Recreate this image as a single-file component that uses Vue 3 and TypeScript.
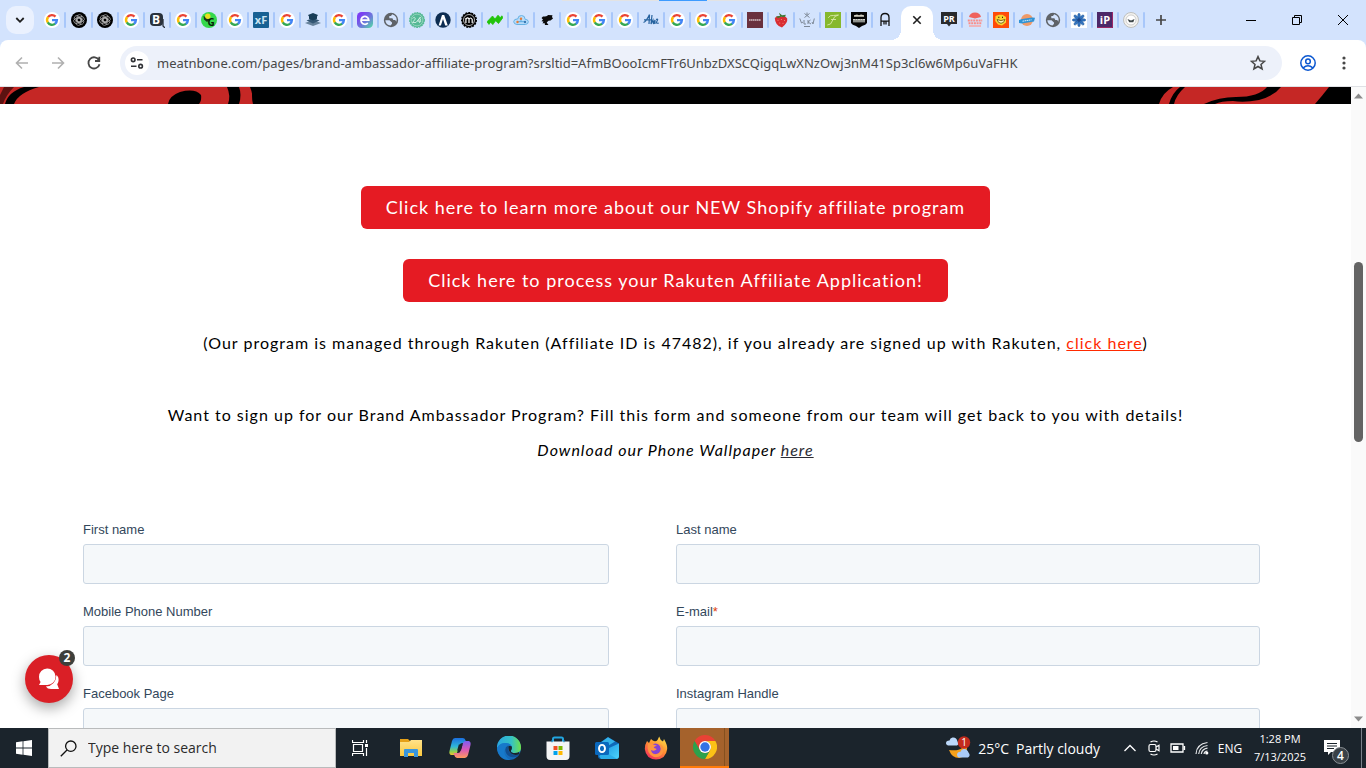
<script setup lang="ts">
import { ref } from 'vue'

interface Letter {
  text: string
  x: number
  y: number
  size: number
  fill: string
}

interface Tab {
  icon: string
  title: string
}

interface Field {
  id: string
  label: string
  required?: boolean
}

const google = (n: number): Tab[] => Array.from({ length: n }, () => ({ icon: 'google', title: 'Google Search' }))
const tab = (icon: string, title: string): Tab => ({ icon, title })

const letters: Record<string, Letter> = {
  bigb: { text: 'B', x: 7, y: 12, size: 12, fill: '#fff' },
  greeng: { text: 'G', x: 10, y: 14, size: 10, fill: '#071c08' },
  xf: { text: 'xF', x: 8, y: 12, size: 11, fill: '#c9e4f2' },
  pr: { text: 'PR', x: 8, y: 10, size: 9, fill: '#fff' },
  ip: { text: 'iP', x: 8, y: 12, size: 11, fill: '#fff' },
}

const tabsBefore: Tab[] = [
  ...google(1),
  tab('gpt', 'ChatGPT'),
  tab('gpt', 'ChatGPT'),
  ...google(1),
  tab('bigb', 'B'),
  ...google(1),
  tab('greeng', 'G'),
  ...google(1),
  tab('xf', 'xF'),
  ...google(1),
  tab('stack', 'Library'),
  ...google(1),
  tab('epurple', 'e'),
  tab('globe', 'New page'),
  tab('seal', '24'),
  tab('bluea', 'A'),
  tab('gearm', 'm'),
  tab('zigzag', 'Trends'),
  tab('cloud', 'Cloud'),
  tab('bird', 'Bird'),
  ...google(3),
  tab('script', 'Alexis'),
  ...google(3),
  tab('maroon', 'Treehouse'),
  tab('berry', 'Strawberry'),
  tab('crest', 'Ulku'),
  tab('leaf', 'F'),
  tab('shield', 'Moonshine'),
  tab('arch', 'A'),
]

const tabsAfter: Tab[] = [
  tab('pr', 'PR'),
  tab('burger', 'Burger'),
  tab('smile', 'Smile'),
  tab('orb', 'Orb'),
  tab('globe', 'New page'),
  tab('flower', 'Flower'),
  tab('ip', 'iP'),
  tab('coin', 'Coin'),
]

const url = ref(
  'meatnbone.com/pages/brand-ambassador-affiliate-program?srsltid=AfmBOooIcmFTr6UnbzDXSCQigqLwXNzOwj3nM41Sp3cl6w6Mp6uVaFHK',
)

const fields: Field[] = [
  { id: 'first-name', label: 'First name' },
  { id: 'last-name', label: 'Last name' },
  { id: 'phone', label: 'Mobile Phone Number' },
  { id: 'email', label: 'E-mail', required: true },
  { id: 'facebook', label: 'Facebook Page' },
  { id: 'instagram', label: 'Instagram Handle' },
]

const apps: Tab[] = [
  tab('explorer', 'File Explorer'),
  tab('copilot', 'Copilot'),
  tab('edge', 'Microsoft Edge'),
  tab('store', 'Microsoft Store'),
  tab('outlook', 'Outlook'),
  tab('firefox', 'Firefox'),
  tab('chrome', 'Google Chrome'),
]
</script>

<template>
  <div class="desktop">
    <svg class="defs" aria-hidden="true">
      <defs>
        <linearGradient id="g-e" x1="0" y1="0" x2="1" y2="1">
          <stop offset="0.2" stop-color="#7b3ff2" /><stop offset="0.6" stop-color="#6c7fd8" /><stop offset="1" stop-color="#4fe3a0" />
        </linearGradient>
        <linearGradient id="g-edge" x1="0" y1="0" x2="1" y2="0">
          <stop offset="0" stop-color="#2aa7e0" /><stop offset="0.6" stop-color="#35c1c5" /><stop offset="1" stop-color="#6ee04b" />
        </linearGradient>
        <linearGradient id="g-edge2" x1="0" y1="0" x2="0" y2="1">
          <stop offset="0" stop-color="#1b8fd8" /><stop offset="1" stop-color="#1565b4" />
        </linearGradient>
        <linearGradient id="g-cop1" x1="0" y1="0" x2="0" y2="1">
          <stop offset="0" stop-color="#1b6fe0" /><stop offset="0.5" stop-color="#2fb6d8" /><stop offset="0.8" stop-color="#8fd14f" /><stop offset="1" stop-color="#f2c230" />
        </linearGradient>
        <linearGradient id="g-cop2" x1="0" y1="0" x2="0" y2="1">
          <stop offset="0" stop-color="#7d5cf0" /><stop offset="0.5" stop-color="#d958b8" /><stop offset="1" stop-color="#ff9a5c" />
        </linearGradient>
        <linearGradient id="g-fox" x1="0.8" y1="0" x2="0.2" y2="1">
          <stop offset="0" stop-color="#ffe14a" /><stop offset="0.45" stop-color="#ff9330" /><stop offset="1" stop-color="#f5285e" />
        </linearGradient>
        <linearGradient id="g-out" x1="0" y1="0" x2="1" y2="1">
          <stop offset="0" stop-color="#1690e0" /><stop offset="1" stop-color="#4fd6fb" />
        </linearGradient>
        <linearGradient id="g-folder" x1="0" y1="0" x2="0" y2="1">
          <stop offset="0" stop-color="#ffe28a" /><stop offset="1" stop-color="#fbc93f" />
        </linearGradient>
      </defs>

      <symbol id="i-google" viewBox="0 0 16 16">
        <circle cx="8" cy="8" r="8" fill="#fff" />
        <g fill="none" stroke-width="2.4">
          <path d="M4 5.1A4.9 4.9 0 0 1 11.5 4.6" stroke="#ea4335" />
          <path d="M3.9 10.6A4.9 4.9 0 0 1 4.1 5" stroke="#fbbc05" />
          <path d="M11.2 11.7A4.9 4.9 0 0 1 3.8 10.4" stroke="#34a853" />
          <path d="M8 8.1H12.9A4.9 4.9 0 0 1 11 11.9" stroke="#4285f4" />
        </g>
      </symbol>
      <symbol id="i-gpt" viewBox="0 0 16 16">
        <circle cx="8" cy="8" r="8" fill="#000" />
        <g fill="none" stroke="#c9c9c9" stroke-width="0.6">
          <rect v-for="a in [0, 60, 120, 180, 240, 300]" :key="a" x="6" y="2.6" width="5" height="7.6" rx="2.5" :transform="`rotate(${a} 8 8)`" />
        </g>
      </symbol>
      <symbol id="i-bigb" viewBox="0 0 16 16">
        <rect x="1" y="1" width="13" height="13" rx="4" fill="#29323c" />
        <path d="M14 7V14L16 16" stroke="#29323c" stroke-width="1.3" fill="none" />
      </symbol>
      <symbol id="i-greeng" viewBox="0 0 16 16">
        <circle cx="8" cy="8" r="8" fill="#35d84c" />
        <path d="M2.5 4L9 7.5L6 10L3 7.5Z" fill="#17351a" />
        <circle cx="6.8" cy="4.2" r="2.7" fill="#e9e01e" />
      </symbol>
      <symbol id="i-xf" viewBox="0 0 16 16">
        <rect width="16" height="16" rx="1" fill="#176093" />
      </symbol>
      <symbol id="i-stack" viewBox="0 0 16 16">
        <path d="M0 11L8 8L16 11L8 14Z" fill="#66829b" />
        <path d="M1.5 8.6L8 6L14.5 8.6L8 11.5Z" fill="#345774" />
        <path d="M3 3L8 1L13 3L12 4.5V6.8L8 8.6L4 6.8V4.5Z" fill="#183d58" />
      </symbol>
      <symbol id="i-epurple" viewBox="0 0 16 16">
        <rect width="16" height="16" rx="4.5" fill="url(#g-e)" />
        <path d="M4.2 8.2H11.8A3.9 3.9 0 1 0 10.8 11" fill="none" stroke="#fff" stroke-width="1.7" />
      </symbol>
      <symbol id="i-globe" viewBox="0 0 16 16">
        <circle cx="8" cy="8" r="7.2" fill="#5f6368" />
        <path d="M2.3 8.3H6.5L9 10.6V11.8L7.5 13.6Q2.8 13.2 2.3 8.3Z" fill="#d3e3fd" />
        <path d="M9.2 2.2L8 4H6.3V6.3H9.4L10.3 8H12.2L13.4 9.8Q15 4.5 9.2 2.2Z" fill="#d3e3fd" />
      </symbol>
      <symbol id="i-seal" viewBox="0 0 16 16">
        <circle cx="8" cy="8" r="7.3" fill="#55b995" stroke="#55b995" stroke-width="1.3" stroke-dasharray="1.8 0.8" />
        <circle cx="8" cy="8" r="5.9" fill="none" stroke="#a9dcca" stroke-width="0.7" />
        <path d="M3.5 6.5Q6 4 6.3 7L3.5 10.5H7L11.5 5L8.6 9.2H12.2M11.7 6.5L10.5 11" fill="none" stroke="#cfeee4" stroke-width="0.9" />
      </symbol>
      <symbol id="i-bluea" viewBox="0 0 16 16">
        <circle cx="8" cy="8" r="7.7" fill="#0d2d52" />
        <path d="M3.6 13.4L7 3H9.2L12.8 13.4H10.2L8 7L5.9 13.4Z" fill="#fff" />
      </symbol>
      <symbol id="i-gearm" viewBox="0 0 16 16">
        <circle cx="8" cy="8" r="7.2" fill="#000" stroke="#000" stroke-width="1.6" stroke-dasharray="2 1" />
        <circle cx="8" cy="8" r="5.5" fill="none" stroke="#ddd" stroke-width="0.8" />
        <path d="M4.9 11V6M4.9 7.5Q6.4 4.5 8 7V11M8 7.5Q9.6 4.5 11.2 7.5V11" fill="none" stroke="#fff" stroke-width="1.2" />
      </symbol>
      <symbol id="i-zigzag" viewBox="0 0 16 16">
        <path d="M0 9.8L5.5 4L8 7L11 3.2L13.3 5.8L14.8 3.8L16 5.5L11.5 11.5L8.6 8.8L5.8 12.6L3.6 10.2L2 12.4Z" fill="#22c40b" stroke="#22c40b" stroke-width="0.8" />
      </symbol>
      <symbol id="i-cloud" viewBox="0 0 16 16">
        <path d="M4 12.5H12.5Q15.5 12 15.3 9.6Q15 7.2 12.2 7.4Q12 3.5 8.5 3.5Q5 3.5 4.8 6.9Q0.8 6.8 0.7 9.7Q0.8 12.2 4 12.5Z" fill="#b6dbfa" stroke="#65b2e4" />
        <path d="M4 9.7H12M8 7V9.7" stroke="#5ba8dd" />
        <circle cx="8" cy="6.7" r="1.2" fill="#e87c34" /><circle cx="4.5" cy="10" r="1.2" fill="#e87c34" /><circle cx="12" cy="10" r="1.2" fill="#3878b4" />
      </symbol>
      <symbol id="i-bird" viewBox="0 0 16 16">
        <path d="M2.5 6L4 4.5Q8 4.5 9 3L13.5 3.2L13 5L14 6.5L11.5 8.5L9.5 8.8L7.7 10.5L9.5 13H6L5.5 11L3.5 11.5L4.5 9.5L2.5 9.2L4 7.5Z" fill="#0b0b0b" />
      </symbol>
      <symbol id="i-script" viewBox="0 0 16 16">
        <path d="M0.5 10.5Q3 10 6.5 2.6L6 12M1 7.8H9M9 3L8 12L10 8L10.5 12L12 8V12M13 7.5Q15.8 6.2 14 9Q12.5 12 15.8 11" fill="none" stroke="#27639f" stroke-width="1.2" />
      </symbol>
      <symbol id="i-maroon" viewBox="0 0 16 16">
        <rect width="16" height="16" fill="#69303d" />
        <path d="M2 8H14" stroke="#d3bfc4" stroke-width="1.3" stroke-dasharray="1.5 0.4" />
      </symbol>
      <symbol id="i-berry" viewBox="0 0 16 16">
        <path d="M1.8 6Q5 2.8 8 4.8Q11.5 2.8 14.2 6.5Q15 10.8 9 15.5Q2 13.5 1.8 6Z" fill="#d92d32" />
        <path d="M3 4.6L7 4L6 0.8L9 3.2L13 2.8L11.5 5.2L8 4.8L5 6.3Z" fill="#3f7a35" />
        <g fill="#f6a18d"><circle cx="5" cy="8.3" r="0.5" /><circle cx="8.3" cy="7.6" r="0.5" /><circle cx="11.5" cy="8.5" r="0.5" /><circle cx="6.8" cy="11" r="0.5" /><circle cx="10" cy="11.2" r="0.5" /></g>
      </symbol>
      <symbol id="i-crest" viewBox="0 0 16 16">
        <path d="M5.5 1.5L10.5 5.5M10.5 1.5L5.5 5.5M8 0.5V3M0.8 6.5L2.5 11L4 10M5 8V12H7M9 8V12M9 10L11.5 8M9 10L12 12M13 10L14 12L15.3 6.5M5 14.5H11" fill="none" stroke="#7d8896" stroke-width="1" />
      </symbol>
      <symbol id="i-leaf" viewBox="0 0 16 16">
        <rect width="16" height="16" fill="#86b82d" />
        <path d="M2.3 13Q6 13.5 7.8 8Q9 3.5 13.5 3M3.2 5.8Q5 2.8 8.4 3.5L13.5 3M6 7.5H11" fill="none" stroke="#d9e8a8" stroke-width="0.9" />
      </symbol>
      <symbol id="i-shield" viewBox="0 0 16 16">
        <path d="M0 0H16V11Q15 13 11 14L8 16L5 14Q1 13 0 11Z" fill="#050505" />
        <path d="M3 3.2L6 2.5L8 3.2L10 2.5L13 3.2V4.8H3Z" fill="#d4d1c2" />
        <path d="M2 7.2H14V10.4H2Z" fill="#8d908c" />
        <path d="M2 7.6H14" stroke="#dcdcd6" stroke-width="1" stroke-dasharray="2 0.5" />
      </symbol>
      <symbol id="i-arch" viewBox="0 0 16 16">
        <path d="M4 14V5.5Q4 1.5 8 1.5Q12 1.5 12 5.5V14M4 9.2H12M7 9.2V12.5M9 9.2V12.5" fill="none" stroke="#111" stroke-width="1.3" />
      </symbol>
      <symbol id="i-pr" viewBox="0 0 16 16">
        <path d="M0 0H16V12H10L8 14.5L6 12H0Z" fill="#292a2c" />
      </symbol>
      <symbol id="i-burger" viewBox="0 0 16 16">
        <path d="M2 5Q3 0.5 8 0.5Q13 0.5 14 5L8 6.5Z" fill="#ef625d" />
        <path d="M0.8 8.4H15.2M1.5 11.2H14.5" stroke="#fa8d88" stroke-width="2" stroke-dasharray="2 0.7" />
        <path d="M2 14H14" stroke="#eeb4ba" stroke-width="2" />
      </symbol>
      <symbol id="i-smile" viewBox="0 0 16 16">
        <rect width="16" height="16" fill="#ff4c08" />
        <path d="M2.5 4L6 2.8L9.5 2.7L13 5V10.5L9 13.6L5 12.5L2.2 9Z" fill="#f8d42e" />
        <path d="M4 7.5L8 8.6L12 7.5Q11 11.3 8 11.3Q5 11.3 4 7.5Z" fill="#fff3b8" stroke="#755b12" stroke-width="0.9" />
        <path d="M5.8 4.7V6M9.5 4.7V6" stroke="#34290d" />
      </symbol>
      <symbol id="i-orb" viewBox="0 0 16 16">
        <circle cx="8" cy="8" r="6" fill="#ef9a68" />
        <path d="M0 8L3 7L13 5.6L16 5.8L15 9.6L3 11.5L0 11Z" fill="#3193d5" />
        <path d="M3.5 9.2L12.5 7.8" stroke="#d5edfc" stroke-dasharray="1.6 0.5" />
      </symbol>
      <symbol id="i-flower" viewBox="0 0 16 16">
        <rect width="16" height="16" fill="#fff" />
        <g stroke="#174f92" stroke-width="0.5" fill="#3475c1">
          <ellipse v-for="a in [0, 45, 90, 135, 180, 225, 270, 315]" :key="a" cx="8" cy="4.2" rx="1.3" ry="3" :transform="`rotate(${a} 8 8)`" />
        </g>
        <circle cx="8" cy="8" r="1.8" fill="#1d4588" />
      </symbol>
      <symbol id="i-ip" viewBox="0 0 16 16">
        <rect width="16" height="16" fill="#4b2768" />
        <path d="M15.5 0V15.5H0" fill="none" stroke="#9b2765" />
      </symbol>
      <symbol id="i-coin" viewBox="0 0 16 16">
        <circle cx="8" cy="8" r="7.5" fill="#f3f2ef" stroke="#bfc0be" />
        <circle cx="8" cy="8" r="5" fill="#fff" stroke="#bbb" stroke-width="0.7" />
        <path d="M4.5 7L8 8.5L11.5 7L10.3 10.3H6.2Z" fill="#40494b" />
      </symbol>

      <symbol id="a-explorer" viewBox="0 0 24 24">
        <path d="M1 3H9L11 5V10H1Z" fill="#e6a118" />
        <path d="M1 6H10L12 4H23V20H1Z" fill="url(#g-folder)" />
        <path d="M5 21V14Q5 13 6 13H18Q19 13 19 14V21H15V17H9V21Z" fill="#3a96dc" />
      </symbol>
      <symbol id="a-copilot" viewBox="0 0 24 24">
        <path d="M7 2H15Q17 2 17.8 5L18.5 7H14Q12 7 11.3 9.5L9 17Q8.2 19 6 19H3Q0.8 18 1.5 15L4 5Q4.8 2 7 2Z" fill="url(#g-cop1)" />
        <path d="M17 22H9Q7 22 6.2 19L5.5 17H10Q12 17 12.7 14.5L15 7Q15.8 5 18 5H21Q23.2 6 22.5 9L20 19Q19.2 22 17 22Z" fill="url(#g-cop2)" />
        <path d="M10.8 8.5H14.6L13 14.5H9.2Z" fill="#1b242c" />
      </symbol>
      <symbol id="a-edge" viewBox="0 0 24 24">
        <circle cx="12" cy="12" r="12" fill="url(#g-edge2)" />
        <path d="M0 12A12 12 0 0 1 24 11Q24.5 17 18 17Q13.5 17 14 14.5Q15.5 12.5 14.5 10Q12 6 7 7.2Q2 8 0 12Z" fill="url(#g-edge)" />
        <path d="M0 12Q3 6.5 9 7Q13 7.2 14.7 10.2L12 9.4Q7 10 7 15Q7.5 21.5 13.5 23.9Q2 25 0 12Z" fill="#1779ca" />
        <path d="M11 9.6Q6.8 11.8 9 17Q12 23 20.5 20.4L22.3 18.2Q18.5 20 14.7 18Q10.3 15.6 11 9.6Z" fill="#124f91" />
        <path d="M14.6 10.2Q15.5 12.5 14 14.5Q13.5 17 18 17Q20.5 17 22 16L22.5 18Q18 20 14.2 17.5Q10.5 14.5 11.6 9.8Z" fill="#1b242c" />
      </symbol>
      <symbol id="a-store" viewBox="0 0 24 24">
        <path d="M7 7V3Q7 1.5 8.5 1.5H15.5Q17 1.5 17 3V7" fill="none" stroke="#22a5e0" stroke-width="2" />
        <path d="M0.5 5.5H23.5V20Q23.5 24 20 24H4Q0.5 24 0.5 20Z" fill="#f4f4f5" />
        <path d="M6 4.2V6.2M18 4.2V6.2" stroke="#218fc5" stroke-width="1.2" />
        <path d="M7.5 10H11.5V14H7.5Z" fill="#f04e23" /><path d="M12.5 10H16.5V14H12.5Z" fill="#7db900" />
        <path d="M7.5 15H11.5V19H7.5Z" fill="#00a2ed" /><path d="M12.5 15H16.5V19H12.5Z" fill="#ffb800" />
      </symbol>
      <symbol id="a-outlook" viewBox="0 0 24 24">
        <path d="M3 8L13 1L24 7.5V20Q24 23 21 23H6Q3 23 3 20Z" fill="#0f69b8" />
        <path d="M5 7L13 1.3L20 5.6L11 11Z" fill="#35b3e9" />
        <path d="M14 12L24 7.5V20Q24 23 21 23H7Z" fill="url(#g-out)" />
        <path d="M4 20L10 16L22 22.7Q21 23 20 23H6Z" fill="#2baeea" />
        <rect y="6" width="14" height="13" rx="1.5" fill="#0a68bd" />
        <ellipse cx="7" cy="12.5" rx="3" ry="3.6" fill="none" stroke="#fff" stroke-width="1.9" />
      </symbol>
      <symbol id="a-firefox" viewBox="0 0 24 24">
        <path d="M3 5L5 7L7 3Q9 5 10 5Q12 6 13.5 4L15.2 0.5Q16 4 19 5.5L20 3Q23.5 9 23.2 13Q22 23 12 23.5Q2 23 0.8 13Q1 8 3 5Z" fill="url(#g-fox)" />
        <circle cx="11.5" cy="12.8" r="5.2" fill="#8642d5" />
        <path d="M4 7.5Q7 6.5 9.5 8.5L13 9.7Q10 10.2 9.7 11.8L12.8 13Q10.5 15.8 7 14Q7.6 19 13 18Q17 17 17 13Q16.8 9.8 14.5 8Q20 9 19.5 15Q17.5 22 10 21Q2 18 4 7.5Z" fill="#ff9640" />
      </symbol>
      <symbol id="a-chrome" viewBox="0 0 24 24">
        <path d="M1.6 6A12 12 0 0 1 22.4 6H12L6.8 15Z" fill="#e94235" />
        <path d="M22.4 6A12 12 0 0 1 12 24L17.2 15A6 6 0 0 0 12 6Z" fill="#fbc116" />
        <path d="M12 24A12 12 0 0 1 1.6 6L6.8 15A6 6 0 0 0 17.2 15Z" fill="#2da14c" />
        <circle cx="12" cy="12" r="6" fill="#fff" /><circle cx="12" cy="12" r="4.7" fill="#3372e3" />
      </symbol>
    </svg>

    <header class="browser">
      <div class="topline"><i></i><b></b><i></i></div>
      <nav class="strip" aria-label="Tabs">
        <button class="tabsearch" aria-label="Search tabs">
          <svg width="10" height="10" viewBox="0 0 10 10"><path d="M1.3 3L5 6.8L8.7 3" fill="none" stroke="#1f1f1f" stroke-width="1.8" /></svg>
        </button>
        <button v-for="(t, i) in tabsBefore" :key="`b${i}`" class="tab" :class="{ wide: i < 2, plain: i === tabsBefore.length - 1 }" :aria-label="t.title">
          <svg width="16" height="16">
            <use :href="`#i-${t.icon}`" />
            <text v-if="letters[t.icon]" :x="letters[t.icon].x" :y="letters[t.icon].y" :font-size="letters[t.icon].size" :fill="letters[t.icon].fill">{{ letters[t.icon].text }}</text>
          </svg>
        </button>
        <div class="active">
          <button class="close" aria-label="Close tab">
            <svg width="10" height="10" viewBox="0 0 10 10"><path d="M1.3 1.3L8.7 8.7M8.7 1.3L1.3 8.7" stroke="#1f1f1f" stroke-width="1.6" /></svg>
          </button>
        </div>
        <button v-for="(t, i) in tabsAfter" :key="`a${i}`" class="tab" :aria-label="t.title">
          <svg width="16" height="16">
            <use :href="`#i-${t.icon}`" />
            <text v-if="letters[t.icon]" :x="letters[t.icon].x" :y="letters[t.icon].y" :font-size="letters[t.icon].size" :fill="letters[t.icon].fill">{{ letters[t.icon].text }}</text>
          </svg>
        </button>
        <button class="newtab" aria-label="New tab">
          <svg width="12" height="12" viewBox="0 0 12 12"><path d="M6 1V11M1 6H11" stroke="#474747" stroke-width="1.7" /></svg>
        </button>
        <div class="window">
          <button aria-label="Minimize"><svg width="10" height="10"><path d="M0 5.5H10" stroke="#000" /></svg></button>
          <button aria-label="Restore"><svg width="10" height="10"><path d="M0.5 2.5H7.5V9.5H0.5ZM2.5 2.5V0.5H9.5V7.5H7.5" fill="none" stroke="#000" /></svg></button>
          <button aria-label="Close"><svg width="10" height="10"><path d="M0 0L10 10M10 0L0 10" stroke="#000" /></svg></button>
        </div>
      </nav>
      <div class="toolbar">
        <button class="tool" aria-label="Back">
          <svg width="16" height="16" viewBox="0 0 16 16"><path d="M14 8H3M8 2.5L2.5 8L8 13.5" fill="none" stroke="#b0b0b0" stroke-width="1.6" /></svg>
        </button>
        <button class="tool" aria-label="Forward">
          <svg width="16" height="16" viewBox="0 0 16 16"><path d="M2 8H13M8 2.5L13.5 8L8 13.5" fill="none" stroke="#b0b0b0" stroke-width="1.6" /></svg>
        </button>
        <button class="tool" aria-label="Reload">
          <svg width="16" height="16" viewBox="0 0 16 16"><path d="M13 5.2A5.6 5.6 0 1 0 13.5 9.2M13.3 1.8V6H9" fill="none" stroke="#474747" stroke-width="1.8" /></svg>
        </button>
        <div class="omnibox">
          <button class="site" aria-label="View site information">
            <svg width="14" height="12" viewBox="0 0 14 12"><g fill="none" stroke="#303236" stroke-width="1.6"><circle cx="3.2" cy="2.8" r="1.8" /><path d="M7 2.8H12.5M1 9.2H6.5" /><circle cx="10.6" cy="9.2" r="1.8" /></g></svg>
          </button>
          <input v-model="url" class="url" type="text" aria-label="Address and search bar" spellcheck="false" />
          <button class="star" aria-label="Bookmark this tab">
            <svg width="16" height="16" viewBox="0 0 16 16"><path d="M8 1.6L9.9 5.9L14.6 6.3L11 9.4L12.1 14L8 11.5L3.9 14L5 9.4L1.4 6.3L6.1 5.9Z" fill="none" stroke="#474747" stroke-width="1.5" /></svg>
          </button>
        </div>
        <button class="profile" aria-label="Profile">
          <svg width="16" height="16" viewBox="0 0 16 16"><g fill="none" stroke="#0b57d0" stroke-width="1.5"><circle cx="8" cy="8" r="7.2" /><circle cx="8" cy="6.4" r="2.3" /><path d="M3.2 12.8Q8 8.9 12.8 12.8" /></g></svg>
        </button>
        <button class="menu" aria-label="Menu">
          <svg width="4" height="16" viewBox="0 0 4 16"><g fill="#474747"><circle cx="2" cy="3" r="1.6" /><circle cx="2" cy="8" r="1.6" /><circle cx="2" cy="13" r="1.6" /></g></svg>
        </button>
      </div>
    </header>

    <div class="viewport">
      <main class="page">
        <div class="banner">
          <svg width="260" height="17" viewBox="0 0 260 17">
            <path d="M0 0H253Q251 8 253 17H0Z" fill="#c52725" />
            <path d="M0 17V8L4 0H14Q6 8 3 17Z" fill="#5c1211" />
            <path d="M5 17Q8 5 24 0H39Q18 6 14 17Z" fill="#000" />
            <path d="M168 17Q169 9 180 5Q195 1 201 8Q202 13 199 17Z" fill="#000" />
            <path d="M227 0H239Q242 8 239 17H228Q231 9 227 0Z" fill="#000" />
            <path d="M250 0H260V17H253Q253 7 250 0Z" fill="#000" />
          </svg>
          <svg width="170" height="17" viewBox="0 0 170 17">
            <path d="M0 17Q3 6 14 0H170Q163 9 156 17Z" fill="#c52725" />
            <path d="M10 17Q13 6 21 0H26Q17 8 15 17Z" fill="#000" />
            <path d="M45 17Q60 10 77 10Q100 10 108 0H122Q115 9 100 13Q85 16 74 14Q62 14 56 17Z" fill="#000" />
          </svg>
        </div>
        <section class="intro">
          <a href="#shopify" class="cta">Click here to learn more about our NEW Shopify affiliate program</a>
          <a href="#rakuten" class="cta">Click here to process your Rakuten Affiliate Application!</a>
          <p class="note">(Our program is managed through Rakuten (Affiliate ID is 47482), if you already are signed up with Rakuten, <a href="#signed-up" class="red">click here</a>)</p>
          <p>Want to sign up for our Brand Ambassador Program? Fill this form and someone from our team will get back to you with details!</p>
          <p><em>Download our Phone Wallpaper <a href="#wallpaper">here</a></em></p>
        </section>
        <form class="form" @submit.prevent>
          <div v-for="f in fields" :key="f.id" class="field">
            <label :for="f.id">{{ f.label }}<span v-if="f.required" class="req">*</span></label>
            <input :id="f.id" type="text" :required="f.required" />
          </div>
        </form>
      </main>
      <div class="scrollbar" aria-hidden="true">
        <svg width="9" height="6"><path d="M0 5.5L4.5 0.5L9 5.5Z" fill="#8b8b8b" /></svg>
        <div class="track"><div class="thumb"></div></div>
        <svg width="9" height="6"><path d="M0 0.5L4.5 5.5L9 0.5Z" fill="#8b8b8b" /></svg>
      </div>
      <button class="chat" aria-label="Open chat">
        <svg width="22" height="22" viewBox="0 0 22 22">
          <path d="M18.5 7Q21 9 20.5 13Q20.2 15 19.2 16.3L21 21H13Q9.5 21 7.8 18.5Q17.5 18 18.5 7Z" fill="#fff" />
          <path d="M1 17L2.6 14Q1 12 1 9A8.3 8.3 0 1 1 9.3 17Z" fill="#fff" />
        </svg>
        <span class="count">2</span>
      </button>
    </div>

    <footer class="taskbar">
      <button class="start" aria-label="Start">
        <svg width="16" height="16" viewBox="0 0 16 16"><path d="M0 2.2L6.6 1.3V7.5H0ZM7.4 1.2L16 0V7.5H7.4ZM0 8.4H6.6V14.7L0 13.8ZM7.4 8.4H16V16L7.4 14.8Z" fill="#fff" /></svg>
      </button>
      <div class="search">
        <svg width="17" height="17" viewBox="0 0 17 17"><g fill="none" stroke="#111" stroke-width="1.3"><circle cx="10.8" cy="6.2" r="5.2" /><path d="M7 10L0.8 16.2" /></g></svg>
        <input type="text" placeholder="Type here to search" aria-label="Type here to search" />
      </div>
      <button class="task" aria-label="Task view">
        <svg width="17" height="16" viewBox="0 0 17 16"><g fill="none" stroke="#fff"><path d="M1.5 4.5H10.5V11.5H1.5ZM0.5 0V2.5H11.5V0M0.5 16V13.5H11.5V16M14.5 0V3M14.5 8V16" stroke-width="1.2" /></g><path d="M13 4H16V7H13Z" fill="#fff" /></svg>
      </button>
      <button v-for="a in apps" :key="a.icon" class="app" :class="{ current: a.icon === 'chrome' }" :aria-label="a.title">
        <svg width="24" height="24"><use :href="`#a-${a.icon}`" /></svg>
      </button>
      <div class="tray">
        <button class="weather">
          <svg width="26" height="24" viewBox="0 0 26 24">
            <path d="M20 5Q20 16 4 14Q7 22 14 22Q22 21 22 12Z" fill="#f5a11c" />
            <path d="M3 9.5H12Q14.5 8 12.5 5.5Q11.5 1 7.5 1.5Q5 2 4.5 4.5Q0.8 4.5 1 7.5Q1.3 9.2 3 9.5Z" fill="#bcd8fa" />
            <path d="M14 21.5H23Q26 19.5 23.5 16.5Q22 12.5 18.5 13Q16 13.5 15.5 15.8Q11.8 16 12 19Q12.3 21.2 14 21.5Z" fill="#a9cbf8" />
            <circle cx="19" cy="6.5" r="6.2" fill="#c42b1c" />
            <text x="19" y="10" font-size="10" fill="#fff">1</text>
          </svg>
          <span>25°C</span><span>Partly cloudy</span>
        </button>
        <button class="sys" aria-label="Show hidden icons"><svg width="12" height="8"><path d="M0.5 7L6 1.5L11.5 7" fill="none" stroke="#fff" stroke-width="1.3" /></svg></button>
        <button class="sys" aria-label="Meet now"><svg width="12" height="16" viewBox="0 0 12 16"><g fill="none" stroke="#fff" stroke-width="1.2"><rect x="1" y="4.5" width="7" height="7" rx="1.5" /><path d="M8 7L11 5.3V10.7L8 9M2.5 2Q6 0 9.5 2M2.5 14Q6 16 9.5 14" /></g></svg></button>
        <button class="sys" aria-label="Battery"><svg width="16" height="10" viewBox="0 0 16 10"><path d="M1 1H13V9H1ZM14.5 3V7" fill="none" stroke="#fff" stroke-width="1.3" /><path d="M3 3H8.5V7H3Z" fill="#fff" /></svg></button>
        <button class="sys" aria-label="Network"><svg width="14" height="14" viewBox="0 0 14 14"><g fill="none" stroke="#e5e7e9" stroke-width="1.2"><path d="M1 13Q1.5 3 12.5 1.5M3.7 13Q4.5 5.5 12.5 4.5M6.3 13Q7 8 12.5 7.2M9 13Q9.3 10.3 12.5 10" /></g><circle cx="11.8" cy="12" r="1.6" fill="#fff" /></svg></button>
        <button class="lang">ENG</button>
        <button class="clock"><span>1:28 PM</span><span>7/13/2025</span></button>
        <button class="notes" aria-label="Notifications">
          <svg width="16" height="16" viewBox="0 0 16 16"><path d="M0 0H16V12H7L4 15V12H0Z" fill="#fff" /><path d="M3 3.5H13M3 6H13M3 8.5H10" stroke="#1b242c" /></svg>
          <span class="badge">4</span>
        </button>
      </div>
    </footer>
  </div>
</template>

<style>
body {
  overflow: hidden;
}
</style>

<style scoped>
.desktop {
  position: relative;
  display: flex;
  flex-direction: column;
  height: 100vh;
  overflow: hidden;
  background: #fff;
  font-family: 'Open Sans', 'Noto Sans', sans-serif;
}
.desktop * {
  box-sizing: border-box;
}
.defs {
  position: absolute;
  width: 0;
  height: 0;
}
button {
  display: flex;
  flex: none;
  align-items: center;
  justify-content: center;
  padding: 0;
  border: 0;
  background: none;
  color: inherit;
  font: inherit;
}
svg {
  display: block;
  flex: none;
}
svg text {
  text-anchor: middle;
}

.browser {
  background: #d3e3fd;
}
.topline {
  position: absolute;
  top: 0;
  left: 0;
  right: 0;
  display: flex;
  justify-content: center;
  height: 1px;
}
.topline i {
  width: 97px;
  background: #e3e3e3;
}
.topline b {
  width: 48px;
  background: #3d9bff;
}
.strip {
  display: flex;
  align-items: center;
  height: 40px;
}
.tabsearch {
  width: 28px;
  height: 28px;
  margin: 0 4px 0 6px;
  border-radius: 10px;
  background: #eaf1fe;
}
.tab {
  position: relative;
  width: 26px;
  height: 28px;
}
.tab text {
  font-weight: 700;
}
.tab.wide {
  width: 27px;
}
.tab::after {
  content: '';
  position: absolute;
  right: -1px;
  top: 6px;
  width: 2px;
  height: 16px;
  border-radius: 1px;
  background: #a8c7fa;
}
.tab.plain::after {
  display: none;
}
.active {
  position: relative;
  display: flex;
  align-items: center;
  justify-content: center;
  align-self: stretch;
  width: 32px;
  margin: 6px 3px 0;
  padding-bottom: 6px;
  border-radius: 10px 10px 0 0;
  background: #fff;
}
.active::before,
.active::after {
  content: '';
  position: absolute;
  bottom: 0;
  left: -10px;
  width: 10px;
  height: 10px;
  background: radial-gradient(circle at 0 0, transparent 10px, #fff 10px);
}
.active::after {
  left: auto;
  right: -10px;
  background: radial-gradient(circle at 100% 0, transparent 10px, #fff 10px);
}
.close {
  width: 16px;
  height: 16px;
}
.newtab {
  width: 28px;
  height: 28px;
  margin-left: 3px;
}
.window {
  display: flex;
  align-self: stretch;
  margin-left: auto;
}
.window button {
  width: 46px;
}
.toolbar {
  display: flex;
  align-items: center;
  height: 47px;
  border-bottom: 1px solid #dfe1e5;
  border-radius: 8px 8px 0 0;
  background: #fff;
}
.tool {
  width: 28px;
  height: 28px;
  margin-left: 8px;
}
.omnibox {
  display: flex;
  flex: 1;
  align-items: center;
  height: 34px;
  margin-left: 12px;
  padding: 0 10px 0 5px;
  border-radius: 17px;
  background: #edf1fa;
}
.site {
  width: 24px;
  height: 24px;
  border-radius: 12px;
  background: #fff;
}
.url {
  flex: 1;
  min-width: 0;
  height: 28px;
  margin-left: 8px;
  padding: 0;
  border: 0;
  outline: 0;
  background: none;
  color: #474747;
  font: 13px/20px 'Noto Sans', 'Open Sans', sans-serif;
}
.star {
  width: 28px;
  height: 28px;
}
.profile {
  width: 28px;
  height: 28px;
  margin-left: 12px;
}
.menu {
  width: 28px;
  height: 28px;
  margin: 0 8px;
}

.viewport {
  position: relative;
  display: flex;
  flex: 1;
  min-height: 0;
}
.page {
  flex: 1;
  min-width: 0;
  overflow: hidden;
}
.banner {
  display: flex;
  justify-content: space-between;
  padding-right: 22px;
  background: #000;
}
.intro {
  display: flex;
  flex-direction: column;
  align-items: center;
  padding-top: 82px;
  color: #000;
  font: 16px/35px Lato, sans-serif;
  letter-spacing: 1px;
}
.cta {
  padding: 0 25px;
  border-radius: 6px;
  background: #e51b23;
  color: #fff;
  font-size: 18px;
  line-height: 43px;
  text-decoration: none;
}
.cta + .cta {
  margin-top: 30px;
}
.intro p {
  margin: 0;
  text-align: center;
}
.intro .note {
  margin: 23px 0 37px;
}
.intro p a {
  color: #2b2b33;
}
.intro p .red {
  color: #ff2a00;
}
.form {
  display: grid;
  grid-template-columns: 1fr 1fr;
  row-gap: 19px;
  padding: 54px 82px 0 83px;
}
.field {
  padding-right: 67px;
}
.field:nth-child(even) {
  padding-right: 9px;
}
.field label {
  display: block;
  height: 23px;
  color: #33475b;
  font: 13px/18px 'Liberation Sans', Arial, sans-serif;
}
.req {
  color: #e0400a;
}
.field input {
  display: block;
  width: 100%;
  height: 40px;
  padding: 9px 10px;
  border: 1px solid #cbd6e2;
  border-radius: 3px;
  background: #f5f8fa;
}
.scrollbar {
  display: flex;
  flex-direction: column;
  align-items: center;
  width: 15px;
  padding: 6px 0;
  background: #fafafa;
}
.track {
  flex: 1;
  width: 9px;
  padding: 163px 0;
}
.thumb {
  height: 180px;
  border-radius: 5px;
  background: #636363;
}
.chat {
  position: absolute;
  left: 25px;
  bottom: 25px;
  width: 48px;
  height: 48px;
  border-radius: 24px;
  background: #da1f26;
  box-shadow: 0 5px 14px rgba(0, 0, 0, 0.35);
}
.count {
  position: absolute;
  top: -5px;
  right: -2px;
  width: 16px;
  height: 16px;
  border-radius: 8px;
  background: #3e3f3b;
  color: #fff;
  font: 700 12px/16px 'Open Sans', sans-serif;
}

.taskbar {
  display: flex;
  height: 40px;
  background: #1b242c;
  color: #fff;
  font-size: 14px;
}
.start {
  width: 48px;
}
.search {
  display: flex;
  align-items: center;
  width: 288px;
  padding-left: 11px;
  border: 1px solid #b9bbbc;
  background: #f2f2f2;
}
.search input {
  flex: 1;
  min-width: 0;
  margin-left: 11px;
  padding: 0;
  border: 0;
  outline: 0;
  background: none;
  font: 14px/20px 'Open Sans', 'Noto Sans', sans-serif;
}
.search input::placeholder {
  color: #2b2b2b;
  opacity: 1;
}
.task {
  width: 48px;
  margin-right: 2px;
}
.app {
  width: 49px;
}
.current {
  border-bottom: 2px solid #ff7a0a;
  background: linear-gradient(90deg, #a5622c 44px, #85501f 44px, #85501f 45px, #a5622c 45px);
}
.tray {
  display: flex;
  margin-left: auto;
  padding-right: 4px;
}
.weather {
  gap: 7px;
  margin-right: 18px;
}
.sys {
  width: 24px;
}
.lang {
  width: 32px;
  font-size: 12px;
}
.clock {
  flex-direction: column;
  width: 68px;
  font-size: 11px;
  line-height: 18px;
}
.notes {
  position: relative;
  width: 48px;
  padding-right: 12px;
  border-right: 1px solid #79818a;
}
.badge {
  position: absolute;
  left: 18px;
  top: 19px;
  width: 17px;
  height: 17px;
  border: 1px solid #8a9095;
  border-radius: 9px;
  background: #3a4147;
  font: 600 12px/15px 'Open Sans', sans-serif;
}
</style>
